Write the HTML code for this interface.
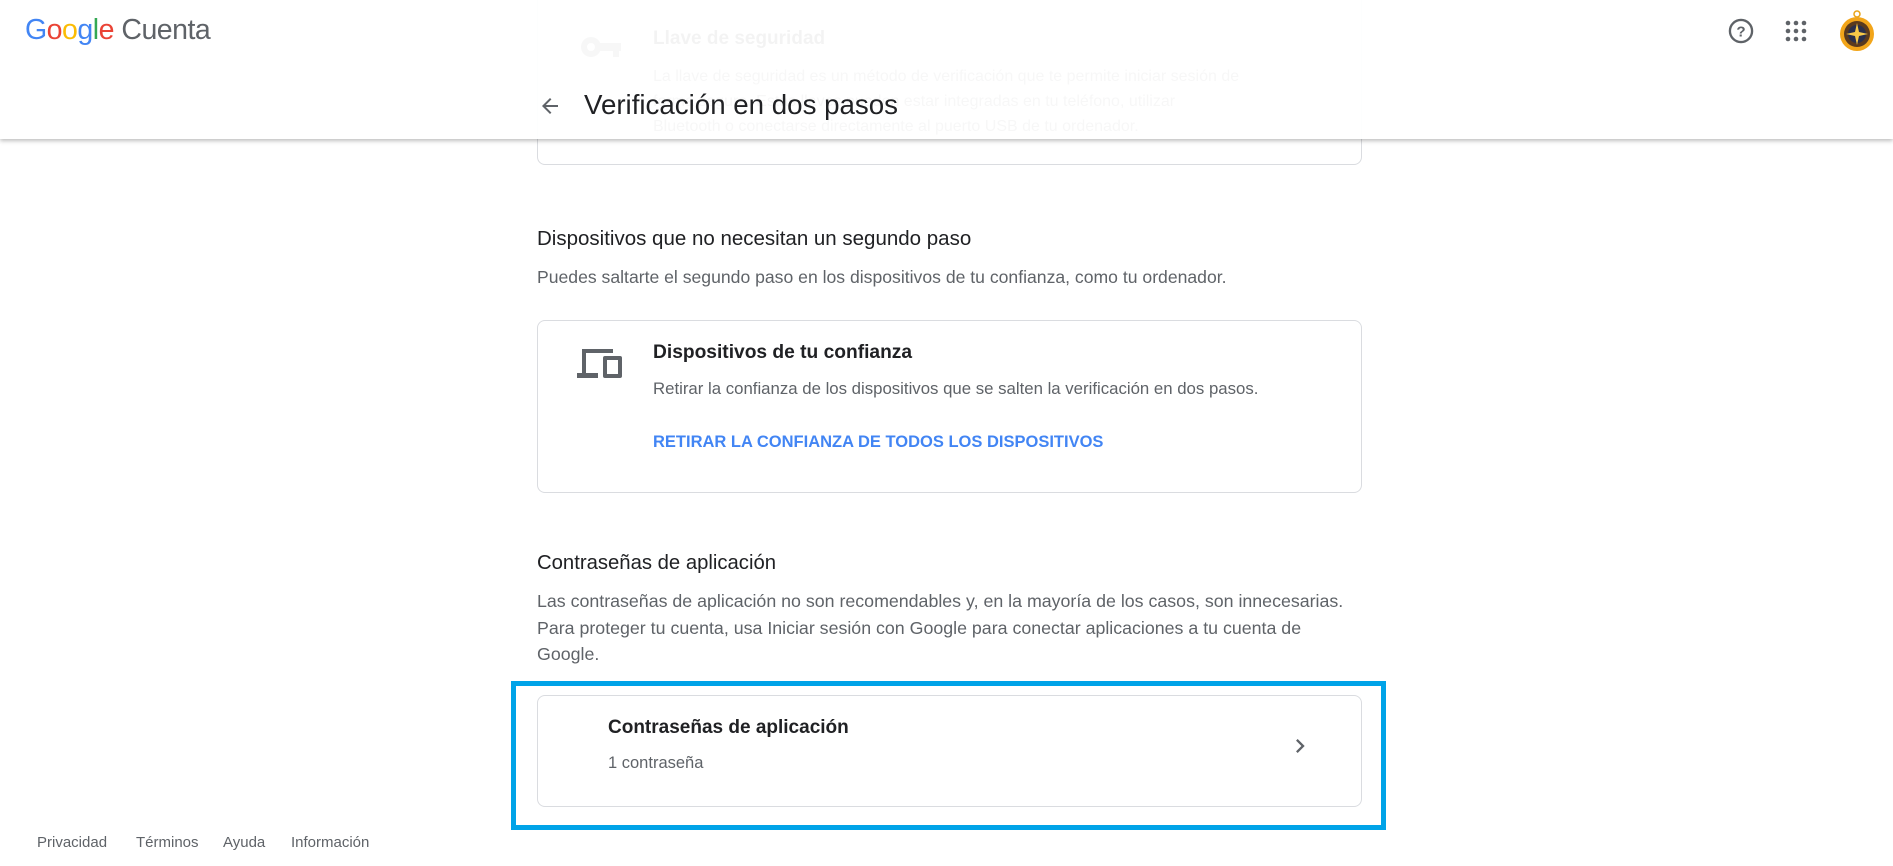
<!DOCTYPE html>
<html><head><meta charset="utf-8"><style>
*{margin:0;padding:0;box-sizing:border-box}
body{width:1893px;height:866px;position:relative;overflow:hidden;background:#fff;font-family:"Liberation Sans",Arial,sans-serif;color:#3c4043}
.a{position:absolute;white-space:nowrap}
.card{position:absolute;left:537px;width:825px;border:1px solid #dadce0;border-radius:8px;background:#fff}
</style></head><body>
<div class="card" style="top:-20px;height:185px"></div>
<svg class="a" style="left:580px;top:34px" width="42" height="26" viewBox="0 0 42 26"><circle cx="11" cy="13" r="10" fill="#5f6368"/><circle cx="11" cy="13" r="4" fill="#fff"/><rect x="18" y="9" width="23" height="8" fill="#5f6368"/><rect x="33" y="15" width="6" height="8" fill="#5f6368"/></svg>
<div class="a" style="left:653px;top:28px;font-size:19px;font-weight:bold;color:#202124">Llave de seguridad</div>
<div class="a" style="left:653px;top:64px;font-size:16px;line-height:25px;color:#5f6368">La llave de seguridad es un método de verificación que te permite iniciar sesión de<br>forma segura. Estas llaves pueden estar integradas en tu teléfono, utilizar<br>Bluetooth o conectarse directamente al puerto USB de tu ordenador.</div>
<div class="a" style="left:0;top:0;width:1893px;height:139px;background:rgba(255,255,255,0.95);box-shadow:0 2px 4px rgba(0,0,0,0.25)"></div>
<div class="a" style="left:25px;top:14px;font-size:28.5px;letter-spacing:-0.5px"><span style="color:#4285f4">G</span><span style="color:#ea4335">o</span><span style="color:#fbbc05">o</span><span style="color:#4285f4">g</span><span style="color:#34a853">l</span><span style="color:#ea4335">e</span> <span style="color:#5f6368">Cuenta</span></div>
<svg class="a" style="left:1727px;top:17px" width="28" height="28" viewBox="0 0 24 24"><circle cx="12" cy="12" r="9.5" fill="none" stroke="#5f6368" stroke-width="2"/><text x="12" y="16.5" font-size="13" font-weight="bold" text-anchor="middle" fill="#5f6368" font-family="Liberation Sans">?</text></svg>
<svg class="a" style="left:1784px;top:19px" width="24" height="24" viewBox="0 0 24 24" fill="#5f6368"><circle cx="4" cy="4" r="2.3"/><circle cx="12" cy="4" r="2.3"/><circle cx="20" cy="4" r="2.3"/><circle cx="4" cy="12" r="2.3"/><circle cx="12" cy="12" r="2.3"/><circle cx="20" cy="12" r="2.3"/><circle cx="4" cy="20" r="2.3"/><circle cx="12" cy="20" r="2.3"/><circle cx="20" cy="20" r="2.3"/></svg>
<svg class="a" style="left:1839px;top:10px" width="36" height="42" viewBox="0 0 36 42"><circle cx="18" cy="4" r="3" fill="none" stroke="#e8a317" stroke-width="1.5"/><circle cx="18" cy="24" r="17" fill="#f2a51a"/><circle cx="18" cy="24" r="13" fill="#5a3a1e"/><circle cx="18" cy="24" r="9" fill="#2a2f4a"/><path d="M18 13 L20 22 L29 24 L20 26 L18 35 L16 26 L7 24 L16 22Z" fill="#f7c948"/></svg>
<svg class="a" style="left:538px;top:94px" width="24" height="24" viewBox="0 0 24 24"><path d="M20 11H7.83l5.59-5.59L12 4l-8 8 8 8 1.41-1.41L7.83 13H20v-2z" fill="#5f6368"/></svg>
<div class="a" style="left:584px;top:89px;font-size:27.7px;color:#202124">Verificación en dos pasos</div>
<div class="a" style="left:537px;top:227px;font-size:20.5px;color:#202124">Dispositivos que no necesitan un segundo paso</div>
<div class="a" style="left:537px;top:267px;font-size:17.6px;color:#5f6368">Puedes saltarte el segundo paso en los dispositivos de tu confianza, como tu ordenador.</div>
<div class="card" style="top:320px;height:173px"></div>
<svg class="a" style="left:577px;top:346px" width="46" height="34" viewBox="0 0 46 34"><path d="M5 3h31v4H9v20h12v5H0v-5h5z" fill="#5f6368"/><rect x="26" y="10" width="19" height="22" rx="2" fill="#5f6368"/><rect x="30" y="14" width="11" height="14" fill="#fff"/></svg>
<div class="a" style="left:653px;top:342px;font-size:19.2px;font-weight:bold;color:#202124">Dispositivos de tu confianza</div>
<div class="a" style="left:653px;top:379px;font-size:16.8px;color:#5f6368">Retirar la confianza de los dispositivos que se salten la verificación en dos pasos.</div>
<div class="a" style="left:653px;top:433px;font-size:16.5px;font-weight:bold;color:#4285f4">RETIRAR LA CONFIANZA DE TODOS LOS DISPOSITIVOS</div>
<div class="a" style="left:537px;top:552px;font-size:20.3px;color:#202124">Contraseñas de aplicación</div>
<div class="a" style="left:537px;top:588px;font-size:17.8px;line-height:26.5px;color:#5f6368">Las contraseñas de aplicación no son recomendables y, en la mayoría de los casos, son innecesarias.<br>Para proteger tu cuenta, usa Iniciar sesión con Google para conectar aplicaciones a tu cuenta de<br>Google.</div>
<div class="a" style="left:511px;top:681px;width:875px;height:149px;border:5px solid #00a3e8"></div>
<div class="card" style="top:695px;height:112px"></div>
<div class="a" style="left:608px;top:717px;font-size:19px;font-weight:bold;color:#202124">Contraseñas de aplicación</div>
<div class="a" style="left:608px;top:754px;font-size:16.5px;color:#5f6368">1 contraseña</div>
<svg class="a" style="left:1286px;top:731px" width="28" height="30" viewBox="0 0 24 24"><path d="M8.6 16.6 13.2 12 8.6 7.4 10 6l6 6-6 6z" fill="#5f6368"/></svg>
<div class="a" style="left:37px;top:834px;font-size:15px;color:#5f6368">Privacidad</div>
<div class="a" style="left:136px;top:834px;font-size:15px;color:#5f6368">Términos</div>
<div class="a" style="left:223px;top:834px;font-size:15px;color:#5f6368">Ayuda</div>
<div class="a" style="left:291px;top:834px;font-size:15px;color:#5f6368">Información</div>
</body></html>
